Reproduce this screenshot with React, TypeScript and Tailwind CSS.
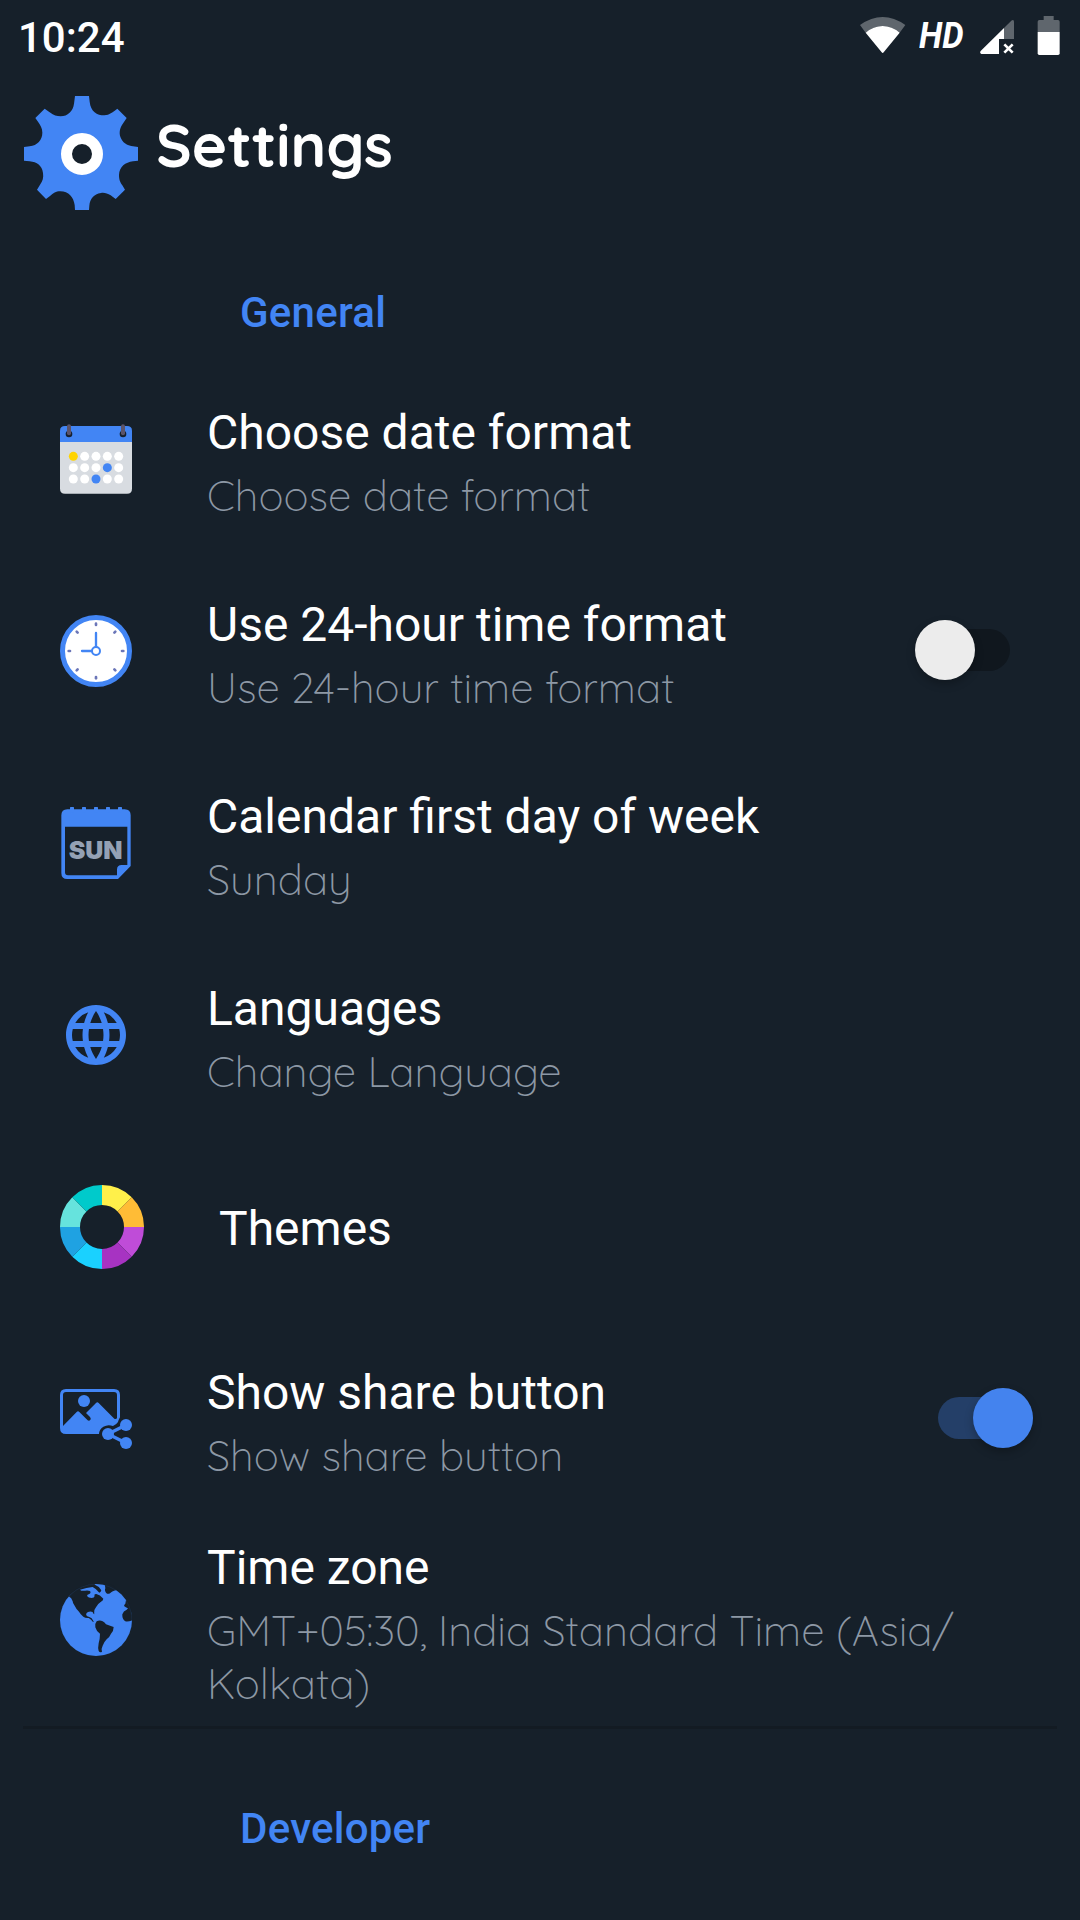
import type { ReactNode } from "react";
import { MdLanguage } from "react-icons/md";

const BLUE = "#4285f4";
const BG = "#16202a";

type Row = {
  title: string;
  lines?: string[];
  icon: ReactNode;
  control?: ReactNode;
};

const rows: Row[] = [
  { title: "Choose date format", lines: ["Choose date format"], icon: <CalendarIcon /> },
  { title: "Use 24-hour time format", lines: ["Use 24-hour time format"], icon: <ClockIcon />, control: <Switch /> },
  { title: "Calendar first day of week", lines: ["Sunday"], icon: <WeekdayIcon /> },
  { title: "Languages", lines: ["Change Language"], icon: <MdLanguage size={72} color={BLUE} /> },
  { title: "Themes", icon: <ThemesIcon /> },
  { title: "Show share button", lines: ["Show share button"], icon: <ShareImageIcon />, control: <Switch on /> },
  { title: "Time zone", lines: ["GMT+05:30, India Standard Time (Asia/", "Kolkata)"], icon: <EarthIcon /> },
];

export default function App() {
  return (
    <div className="h-[1920px] w-[1080px] overflow-hidden bg-[#16202a] font-['Roboto',sans-serif] text-white">
      <StatusBar />

      <header className="flex h-[216px] items-start pl-6 pt-6">
        <GearIcon />
        <h1 className="ml-[18px] mt-3 font-['Quicksand','Lato',sans-serif] text-[60px] font-bold leading-[74px]">
          Settings
        </h1>
      </header>

      <SectionTitle>General</SectionTitle>
      <div className="mt-[26px]">
        {rows.map((row) => (
          <SettingRow key={row.title} {...row} />
        ))}
      </div>

      <div className="mx-[23px] h-[3px] bg-[#131b23]" />
      <div className="mt-[75px]">
        <SectionTitle>Developer</SectionTitle>
      </div>
    </div>
  );
}

function SectionTitle({ children }: { children: ReactNode }) {
  return (
    <h2 className="pl-[240px] text-[42px] font-medium leading-[49px] tracking-[0.25px] text-[#4285f4]">{children}</h2>
  );
}

function SettingRow({ title, lines, icon, control }: Row) {
  if (!lines) {
    return (
      <div className="flex h-[192px] items-center pl-[60px]">
        {icon}
        <div className="ml-[75px] mt-[3px] text-[48px] leading-[56px]">{title}</div>
      </div>
    );
  }

  const tall = lines.length > 1;
  return (
    <div className={`flex items-start pl-[60px] ${tall ? "h-[211px]" : "h-[192px]"}`}>
      <div className={tall ? "mt-[69px]" : "mt-[60px]"}>{icon}</div>
      <div className={`ml-[75px] flex-1 ${tall ? "mt-[25px]" : "mt-[42px]"}`}>
        <div className="text-[48px] leading-[56px]">{title}</div>
        <div className="mt-2 whitespace-nowrap font-['Quicksand','Lato',sans-serif] text-[42px] font-light leading-[53px] text-[#8d98a5]">
          {lines.map((line) => (
            <div key={line}>{line}</div>
          ))}
        </div>
      </div>
      {control}
    </div>
  );
}

function Switch({ on = false }: { on?: boolean }) {
  return on ? (
    <div className="mr-[47px] mt-[74px] flex h-[42px] w-[95px] items-center justify-end rounded-full bg-[#243f68]">
      <div className="-my-[9px] size-[60px] shrink-0 rounded-full bg-[#4483ee] shadow-[0_4px_8px_rgba(0,0,0,0.25)]" />
    </div>
  ) : (
    <div className="mr-[70px] mt-[74px] flex h-[42px] w-[95px] items-center rounded-full bg-[#10171e]">
      <div className="-my-[9px] size-[60px] shrink-0 rounded-full bg-[#ececec] shadow-[0_4px_8px_rgba(0,0,0,0.25)]" />
    </div>
  );
}

function StatusBar() {
  return (
    <div className="flex h-[72px] items-start pl-[18px] pr-5">
      <div className="mt-[13px] text-[42px] font-medium leading-[49px]">10:24</div>
      <svg className="ml-auto mt-[17px]" width="46" height="36" viewBox="60 51 138 108">
        <path d="M60 75 Q94 51 128 51 Q162 51 196 75 L179 98 Q156 78 128 78 Q100 78 77 98 Z" fill="#5f666d" />
        <path d="M77 98 Q100 78 128 78 Q156 78 179 98 L131 157 Q128 161 125 157 Z" fill="#fff" />
      </svg>
      <div className="ml-[13px] mt-[15px] w-[47px] origin-left scale-x-[0.94] text-[36px] font-bold italic leading-[42px]">HD</div>
      <svg className="ml-[14px] mt-5" width="34" height="34" viewBox="420 60 102 102">
        <path d="M492 84 L514 62 Q522 57 522 66 V117 H492 Z" fill="#5f666d" />
        <path d="M492 84 V117 H477 V162 H424 Q418 159 422 153 Z" fill="#fff" />
        <path d="M493 133 L518 158 M518 133 L493 158" stroke="#fff" strokeWidth="8" />
      </svg>
      <svg className="ml-[23px] mt-[15px]" width="23" height="40" viewBox="592 45 69 120">
        <path d="M612 48 H642 V60 H655 Q660 60 660 65 V96 H594 V65 Q594 60 599 60 H612 Z" fill="#5f666d" />
        <path d="M594 96 H660 V160 Q660 165 655 165 H599 Q594 165 594 160 Z" fill="#fff" />
      </svg>
    </div>
  );
}

function GearIcon() {
  return (
    <svg width="114" height="114" viewBox="72 288 342 342">
      <path
        fill={BLUE}
        d="M225 288H267L269 305C272 335 291 346 313 346C330 344 335 338 352 326L380 354L370 369C358 385 356 402 364 417C372 432 385 437 399 439L414 441V482L399 484C376 487 358 500 357 525C357 540 361 547 367 556L375 569L347 597L332 586C322 580 312 577 303 579C281 582 270 597 268 617L267 630H225L224 615C221 592 206 574 181 574C167 574 160 580 150 588L138 597L111 569L121 553C128 543 131 533 129 519C126 497 111 486 89 484L72 482V441L89 439C112 436 127 420 127 398C127 385 121 376 115 367L106 354L134 326L149 337C162 346 170 349 182 349C203 348 219 334 222 311Z"
      />
      <circle cx="246" cy="462" r="46.5" fill={BG} stroke="#fff" strokeWidth="33" />
    </svg>
  );
}

function CalendarIcon() {
  const colors: Record<string, string> = { "0-0": "#ffd400", "1-3": BLUE, "2-2": BLUE };
  return (
    <svg width="72" height="72" viewBox="60 69 216 216">
      <path d="M60 124H276V266Q276 281 261 281H75Q60 281 60 266Z" fill="#d8dce1" />
      <path d="M60 126V92Q60 78 75 78H261Q276 78 276 92V126Z" fill={BLUE} />
      {[87, 249].map((x) => (
        <g key={x}>
          <circle cx={x} cy="102" r="10" fill="#17212f" />
          <rect x={x - 6} y="73" width="12" height="33" rx="6" fill="#5c546a" />
        </g>
      ))}
      {[169, 203, 237].map((y, r) =>
        [100, 134, 168, 202, 236].map((x, c) => (
          <circle key={`${x}-${y}`} cx={x} cy={y} r="13.5" fill={colors[`${r}-${c}`] ?? "#fff"} />
        ))
      )}
    </svg>
  );
}

function ClockIcon() {
  return (
    <svg width="72" height="72" viewBox="60 75 216 216">
      <circle cx="168" cy="183" r="100.5" fill="#fff" stroke={BLUE} strokeWidth="15" />
      {[0, 45, 90, 135, 180, 225, 270, 315].map((a) => (
        <line
          key={a} x1="168" y1="101" x2="168" y2="105"
          stroke="#6b76b8" strokeWidth="8" strokeLinecap="round" transform={`rotate(${a} 168 183)`}
        />
      ))}
      <path d="M168 171V129M156 183H126" stroke={BLUE} strokeWidth="7" strokeLinecap="round" />
      <circle cx="168" cy="183" r="12" fill="#fff" stroke={BLUE} strokeWidth="6" />
    </svg>
  );
}

function WeekdayIcon() {
  return (
    <svg width="72" height="72" viewBox="60 66 216 216">
      <path
        fill={BLUE}
        fillRule="evenodd"
        d="M82 73H254Q272 73 272 91V243L234 282H82Q64 282 64 264V91Q64 73 82 73ZM75 125V262Q75 271 84 271H231V254Q231 240 245 240H262V125Z"
      />
      <path d="M96 70V78M132 70V78M168 70V78M204 70V78M240 70V78" stroke={BLUE} strokeWidth="12" strokeLinecap="round" />
      <text x="86" y="223" fontFamily="Inter, sans-serif" fontWeight="900" fontSize="75" fill="#94a1b4">SUN</text>
    </svg>
  );
}

function ThemesIcon() {
  // clockwise from twelve o'clock
  const colors = ["#fff04a", "#ffbc36", "#bf4cd8", "#a733c2", "#1ad1ff", "#1fa2e2", "#66e3dd", "#00cacb"];
  return (
    <svg width="84" height="84" viewBox="-126 -126 252 252">
      {colors.map((fill, i) => (
        <path key={fill} d="M0 -126A126 126 0 0 1 89.1 -89.1L46.7 -46.7A66 66 0 0 0 0 -66Z" fill={fill} transform={`rotate(${i * 45})`} />
      ))}
    </svg>
  );
}

function ShareImageIcon() {
  return (
    <svg width="72" height="72" viewBox="60 54 216 216">
      <path
        fill={BLUE}
        fillRule="evenodd"
        d="M78 72H222Q240 72 240 90V157Q236 164 234 171Q230 178 219 183Q204 177 190 185Q177 193 177 207H78Q60 207 60 189V90Q60 72 78 72ZM78 81Q69 81 69 90V183L110 141Q114 137 118 141L143 166Q147 169 151 165Q154 160 150 156L138 144L168 114Q172 110 176 114L223 161Q227 164 231 160V90Q231 81 222 81Z"
      />
      <circle cx="132" cy="108" r="18" fill={BLUE} />
      <path d="M258 180L204 207L258 234" fill="none" stroke={BLUE} strokeWidth="10" />
      <circle cx="204" cy="207" r="18" fill={BLUE} />
      <circle cx="258" cy="180" r="18" fill={BLUE} />
      <circle cx="258" cy="234" r="18" fill={BLUE} />
    </svg>
  );
}

function EarthIcon() {
  return (
    <svg width="72" height="72" viewBox="60 57 216 216">
      <circle cx="168" cy="165" r="108" fill={BLUE} />
      <g fill={BG}>
        {/* North America */}
        <path d="M86 94Q102 73 126 63Q145 56 162 56L166 60Q178 64 184 76Q183 82 178 83Q170 72 158 66Q140 68 120 74Q124 79 135 77Q143 75 150 78Q154 83 148 87Q141 88 141 93Q145 99 155 99Q163 99 164 93Q161 87 169 87Q180 89 190 101Q190 106 182 111Q172 117 168 127Q161 135 163 148Q158 145 158 141Q151 138 144 141Q137 144 139 151Q140 155 148 156Q156 158 160 168Q162 172 159 171Q154 163 146 159Q136 160 130 155Q120 146 117 140Q108 131 104 122Q98 116 98 109Q95 98 86 94Z" />
        {/* South America */}
        <path d="M170 169Q179 164 188 169Q194 172 198 178Q211 183 221 186Q221 198 213 206Q209 216 200 223Q193 230 188 242Q183 251 186 260Q180 264 176 258Q173 250 176 235Q180 220 180 206Q169 199 166 187Q164 176 170 169Z" />
        {/* Greenland */}
        <path d="M194 54Q220 56 232 75Q216 78 210 85Q203 89 198 83Q193 77 196 70Z" />
        {/* Africa */}
        <path d="M258 105Q268 110 272 130Q277 148 277 166Q264 171 256 169Q246 162 247 148Q250 138 260 134L264 130Q259 128 253 124Q251 120 256 116Z" />
      </g>
      <circle cx="168" cy="165" r="107.5" fill="none" stroke={BLUE} strokeOpacity="0.3" strokeWidth="1" />
    </svg>
  );
}
